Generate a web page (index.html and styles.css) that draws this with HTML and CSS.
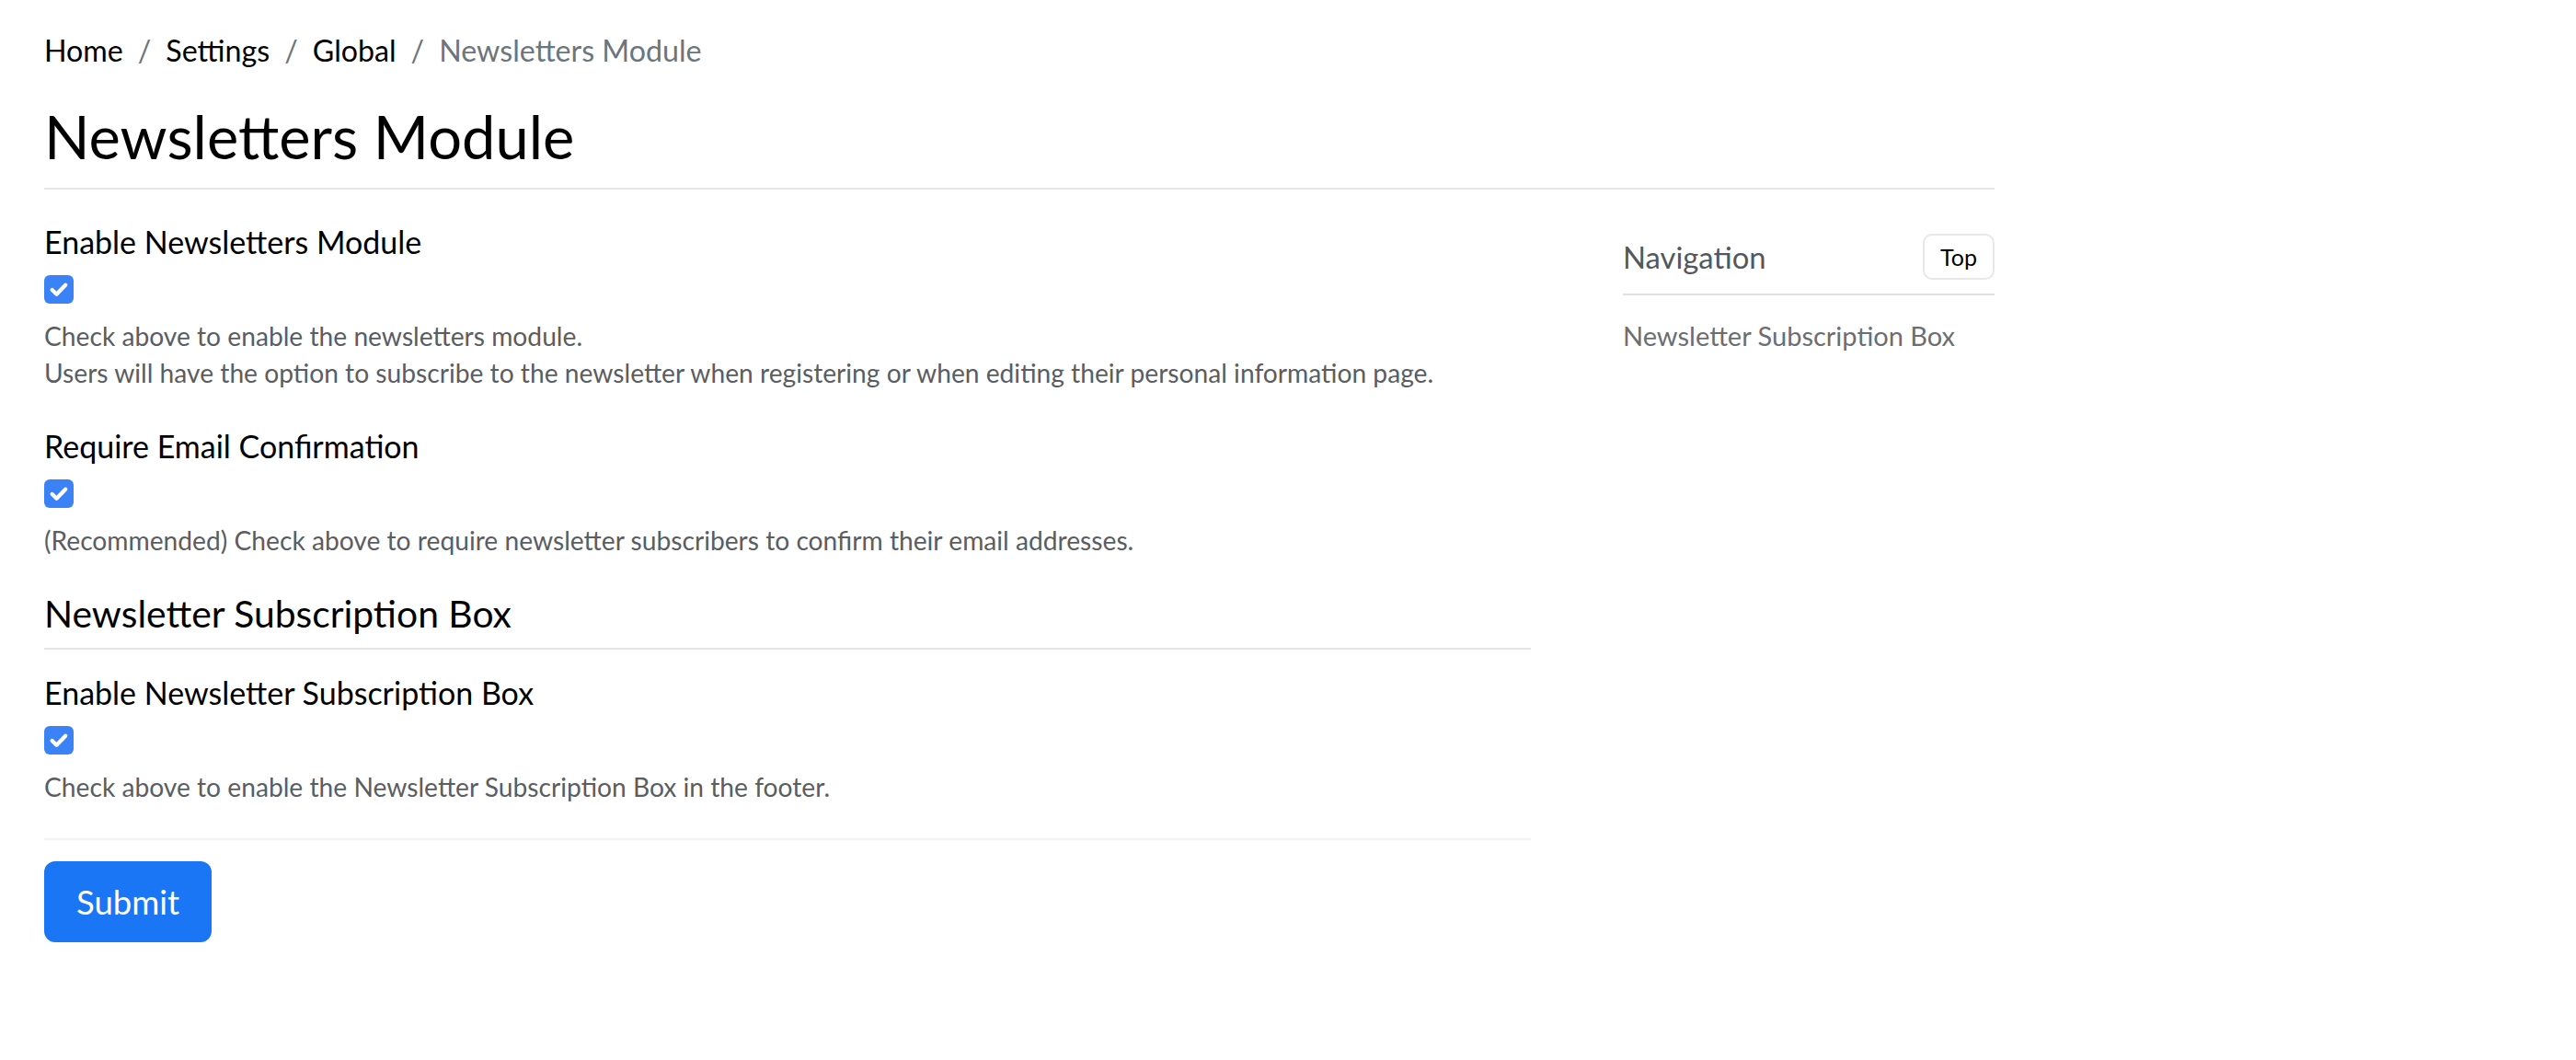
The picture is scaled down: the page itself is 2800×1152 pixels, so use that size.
FILE: index.html
```html
<!DOCTYPE html>
<html lang="en">
<head>
    <meta charset="UTF-8">
    <meta name="viewport" content="width=device-width, initial-scale=1.0">
    <title>Newsletters Module</title>
    <link rel="stylesheet" href="styles.css">
</head>
<body>
    <div class="page">
        <nav class="breadcrumb">
            <a href="#">Home</a>
            <span class="sep">/</span>
            <a href="#">Settings</a>
            <span class="sep">/</span>
            <a href="#">Global</a>
            <span class="sep">/</span>
            <span class="current">Newsletters Module</span>
        </nav>

        <h1 class="page-title">Newsletters Module</h1>

        <div class="layout">
            <form class="settings">
                <!-- General -->
                <div class="field">
                    <label>Enable Newsletters Module</label>
                    <span class="check">
                        <svg viewBox="0 0 16 16"><path d="M4.2 8.3l2.5 2.4 5-5.2"/></svg>
                    </span>
                    <p class="help">Check above to enable the newsletters module.<br>Users will have the option to subscribe to the newsletter when registering or when editing their personal information page.</p>
                </div>

                <div class="field">
                    <label>Require Email Confirmation</label>
                    <span class="check">
                        <svg viewBox="0 0 16 16"><path d="M4.2 8.3l2.5 2.4 5-5.2"/></svg>
                    </span>
                    <p class="help">(Recommended) Check above to require newsletter subscribers to confirm their email addresses.</p>
                </div>

                <!-- Subscription box -->
                <h2 class="section-title" id="subscription-box">Newsletter Subscription Box</h2>

                <div class="field">
                    <label>Enable Newsletter Subscription Box</label>
                    <span class="check">
                        <svg viewBox="0 0 16 16"><path d="M4.2 8.3l2.5 2.4 5-5.2"/></svg>
                    </span>
                    <p class="help">Check above to enable the Newsletter Subscription Box in the footer.</p>
                </div>

                <div class="form-actions">
                    <button type="submit">Submit</button>
                </div>
            </form>

            <aside class="side-nav">
                <div class="side-nav-head">
                    <span class="side-nav-title">Navigation</span>
                    <a href="#" class="top-btn">Top</a>
                </div>
                <a href="#subscription-box" class="side-nav-link">Newsletter Subscription Box</a>
            </aside>
        </div>
    </div>
</body>
</html>
```

FILE: styles.css
```css
* {
    margin: 0;
    padding: 0;
    box-sizing: border-box;
}

body {
    background-color: #fff;
    color: #000;
    font-family: Lato, "Liberation Sans", sans-serif;
}

a {
    color: inherit;
    text-decoration: none;
}

.page {
    width: 2120px;
    margin-left: 48px;
    padding-top: 31px;
}

.breadcrumb {
    display: flex;
    font-size: 32.2px;
    line-height: 48px;
}

.breadcrumb .sep {
    color: #6c757d;
    padding: 0 16px;
}

.breadcrumb .current {
    color: #6c757d;
}

.page-title {
    font-size: 65px;
    font-weight: 400;
    line-height: 79px;
    margin-top: 30px;
    padding-bottom: 16px;
    border-bottom: 2px solid #e6e6e6;
}

.layout {
    display: grid;
    grid-template-columns: 1616px 404px;
    gap: 100px;
    margin-top: 33px;
}

.field {
    margin-bottom: 36px;
}

.field label {
    display: block;
    font-size: 34px;
    line-height: 47px;
    margin-bottom: 13px;
}

.check {
    display: block;
    width: 32px;
    height: 31px;
    background-color: #3b82f6;
    border-radius: 6px;
    margin-bottom: 15px;
}

.check svg {
    display: block;
    width: 32px;
    height: 31px;
    fill: none;
    stroke: #fff;
    stroke-width: 2.2;
    stroke-linecap: round;
    stroke-linejoin: round;
}

.help {
    color: #5a5d61;
    font-size: 28.2px;
    line-height: 40px;
}

.section-title {
    font-size: 40.8px;
    font-weight: 400;
    line-height: 47px;
    padding-bottom: 14px;
    border-bottom: 2px solid #e3e4e8;
    margin-bottom: 23px;
}

.form-actions {
    border-top: 2px solid #f1f1f2;
    padding-top: 23px;
}

.form-actions button {
    background-color: #1a76f5;
    color: #fff;
    border: none;
    border-radius: 12px;
    font-family: inherit;
    font-size: 36.5px;
    width: 182px;
    height: 88px;
    cursor: pointer;
}

.side-nav-head {
    display: flex;
    justify-content: space-between;
    align-items: center;
    margin-top: 15px;
    padding-bottom: 15px;
    border-bottom: 2px solid #e1e1e1;
}

.side-nav-title {
    color: #54575b;
    font-size: 32.8px;
}

.top-btn {
    display: flex;
    align-items: center;
    justify-content: center;
    width: 78px;
    height: 50px;
    border: 2px solid #e8e8e8;
    border-radius: 10px;
    font-size: 25px;
}

.side-nav-link {
    display: block;
    margin-top: 24px;
    color: #6b6e72;
    font-size: 29px;
    line-height: 40px;
}
```
